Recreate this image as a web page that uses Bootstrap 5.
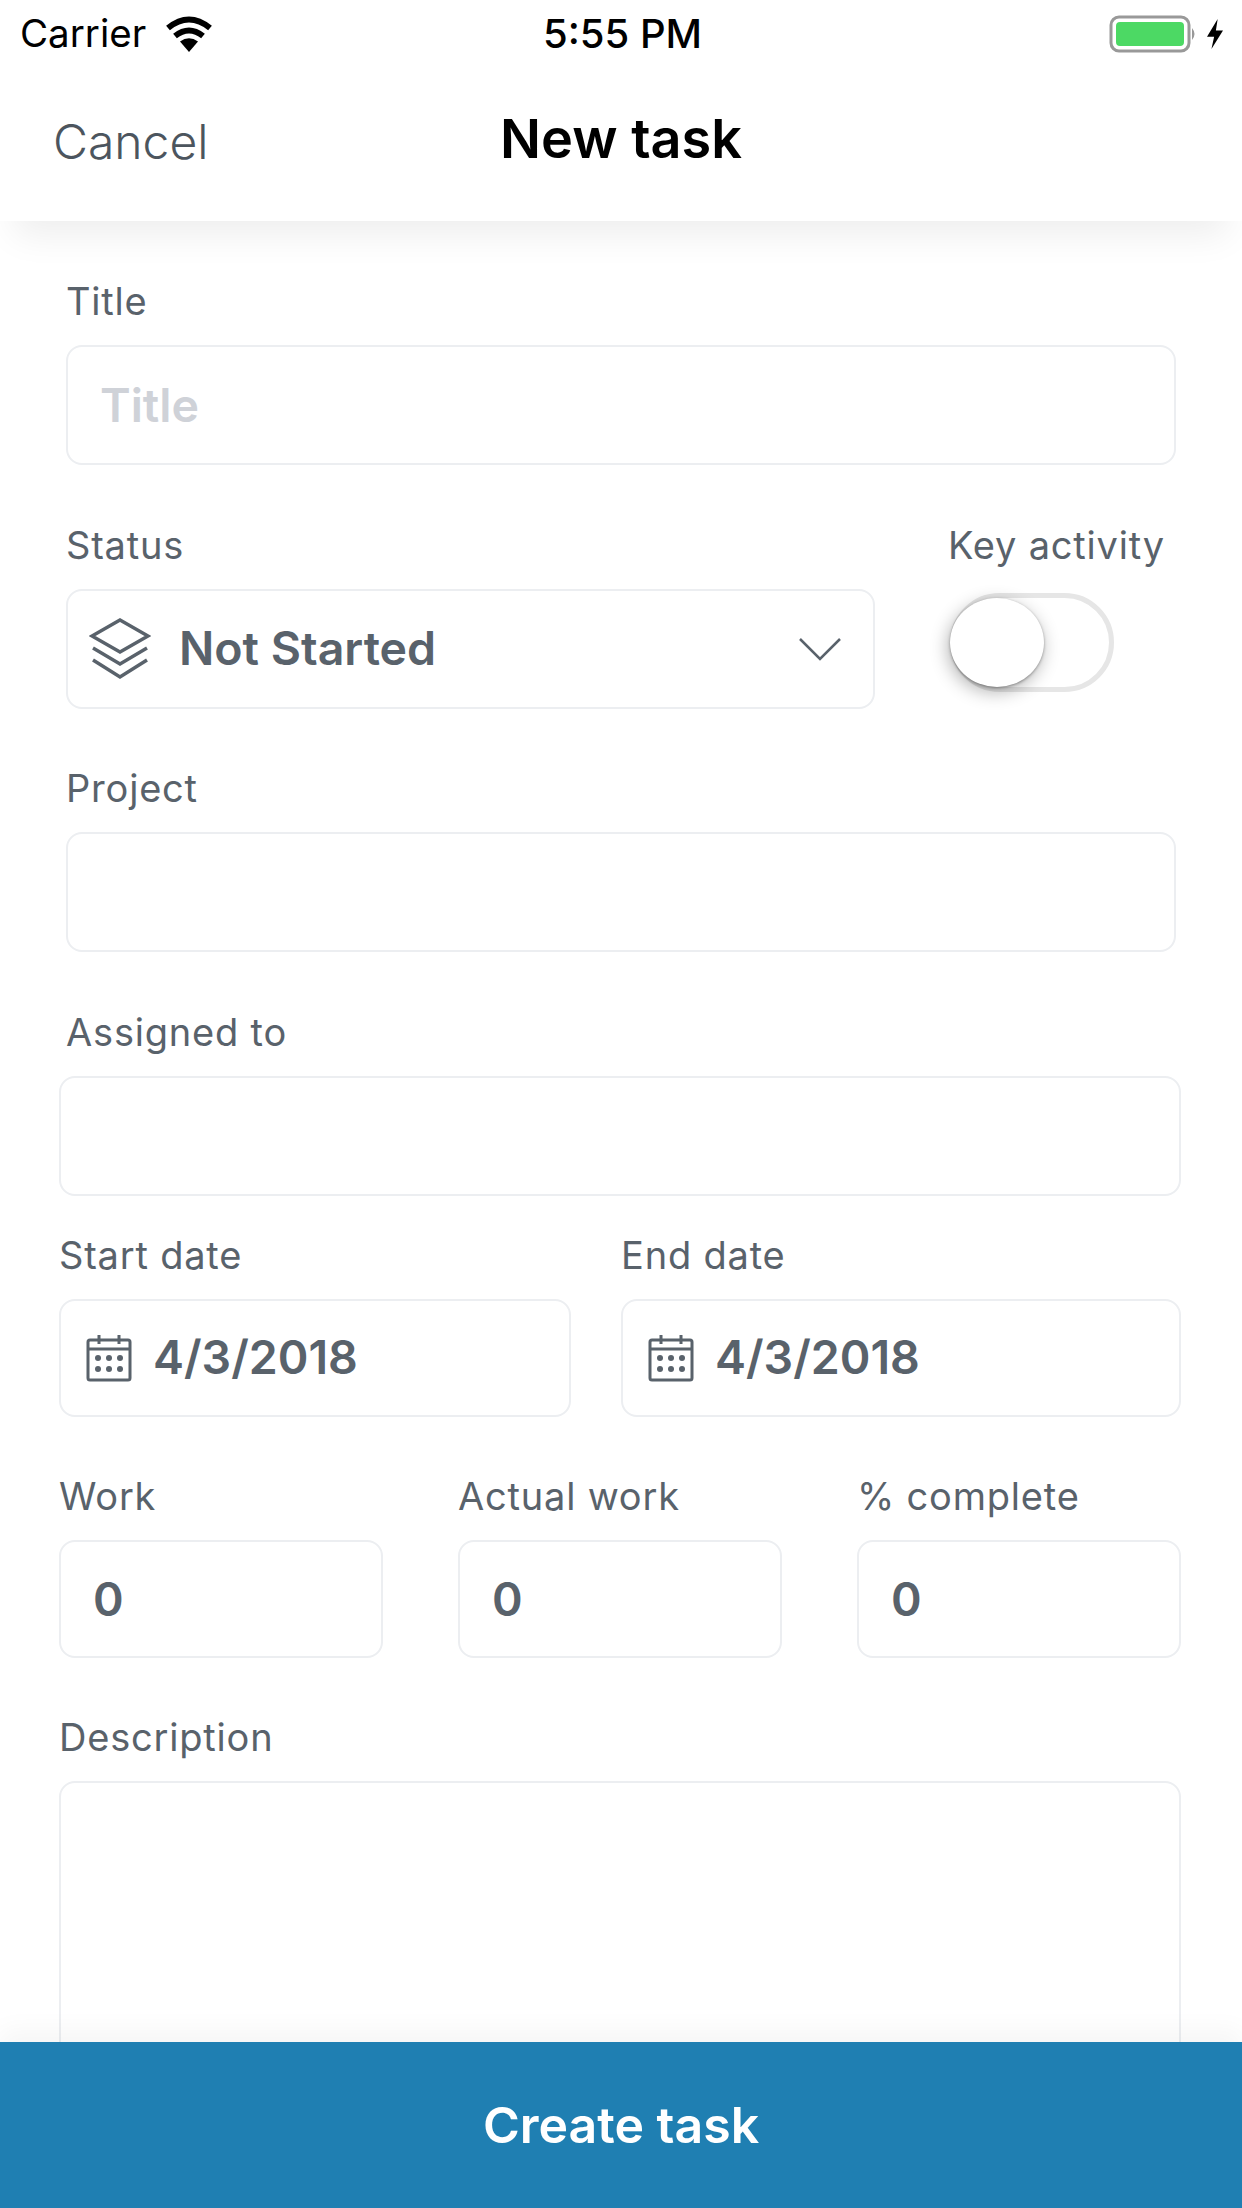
<!DOCTYPE html>
<html lang="en">
<head>
    <meta charset="UTF-8">
    <meta name="viewport" content="width=device-width, initial-scale=1.0">
    <title>New task</title>
    <link href="https://cdn.jsdelivr.net/npm/bootstrap@5.3.0/dist/css/bootstrap.min.css" rel="stylesheet">
    <style>
        html, body {
            height: 100%;
        }
        body {
            font-family: Inter, "Liberation Sans", sans-serif;
            background-color: #fff;
            overflow: hidden;
        }
        .app-screen {
            height: 2208px;
        }
        .status-bar {
            height: 68px;
            padding: 0 17px 0 20px;
            font-size: 38.500px;
            color: #000;
        }
        .status-left, .status-right {
            width: 300px;
        }
        .status-left {
            gap: 18px;
        }
        .status-time {
            font-size: 40px;
            font-weight: 500;
        }
        .top-bar {
            height: 153px;
            z-index: 2;
            background: #fff;
            box-shadow: 0 28px 34px -14px rgba(0, 0, 0, .07);
        }
        .top-cancel {
            left: 53px;
            top: 50%;
            transform: translateY(-54%);
            font-size: 48px;
            color: #4c555e;
            font-weight: 300;
        }
        .top-title {
            font-size: 54px;
            font-weight: 600;
            color: #000;
            margin-top: -12px;
        }
        .form-area {
            padding-top: 58px;
        }
        .fld-label {
            display: block;
            height: 44px;
            line-height: 44px;
            margin-bottom: 22px;
            font-size: 38px;
            letter-spacing: .8px;
            color: #59626b;
            white-space: nowrap;
        }
        .fld-box {
            height: 120px;
            border: 2px solid #eceef1;
            border-radius: 16px;
            background: #fff;
            padding: 0 32px;
            font-size: 46.500px;
            font-weight: 600;
            color: #59626b;
        }
        .fld-box::placeholder {
            color: #cfd2d8;
            opacity: 1;
        }
        .fld-box:focus {
            border-color: #eceef1;
            box-shadow: none;
        }
        .fld-low {
            height: 118px;
        }
        .fld-icon-box {
            padding-left: 25px;
        }
        .fld-area {
            height: 400px;
        }
        .layers-svg {
            margin-left: -4px;
            margin-right: 4px;
        }
        .cal-svg {
            margin-right: 21px;
        }
        .block-a {
            margin: 0 66px 58px;
        }
        .block-status {
            margin-bottom: 57px;
        }
        .block-b {
            margin: 0 61px 57px 59px;
        }
        .block-b .fld-label.keep-in {
            margin-left: 7px;
        }
        .block-tight {
            margin-bottom: 37px;
        }
        .status-col {
            width: 809px;
        }
        .switch-col {
            margin-left: 73px;
        }
        .start-col {
            width: 512px;
        }
        .end-col {
            width: 560px;
            margin-left: 50px;
        }
        .num-col {
            width: 324px;
        }
        .toggle-track {
            width: 164px;
            height: 99px;
            margin-left: 2px;
            margin-top: 26px;
            border: 5px solid #e6e6e6;
            border-radius: 50px;
        }
        .toggle-knob {
            left: -5px;
            top: 0;
            width: 94px;
            height: 89px;
            border-radius: 50%;
            background: #fff;
            box-shadow: -2px 5px 18px rgba(0, 0, 0, .3), 0 1px 3px rgba(0, 0, 0, .35);
        }
        .create-btn {
            height: 166px;
            border: 0;
            border-radius: 0;
            background: #1f7fb2;
            color: #fff;
            font-size: 50px;
            font-weight: 600;
            box-shadow: 0 -12px 24px rgba(0, 0, 0, .04);
        }
    </style>
</head>
<body>
    <div class="app-screen d-flex flex-column">
        <div class="status-bar flex-shrink-0 d-flex align-items-center justify-content-between">
            <div class="status-left d-flex align-items-center">
                <span>Carrier</span>
                <svg width="50" height="36" viewBox="0 0 50 36"><path d="M25 36 16 25.500Q25 19 34 25.500Z" fill="#000"/><path d="M11 20Q25 9 39 20" fill="none" stroke="#000" stroke-width="6"/><path d="M4 12Q25 -5 46 12" fill="none" stroke="#000" stroke-width="6"/></svg>
            </div>
            <div class="status-time">5:55 PM</div>
            <div class="status-right d-flex align-items-center justify-content-end gap-2">
                <svg width="88" height="38" viewBox="0 0 88 38"><rect x="2" y="2" width="78" height="34" rx="8" fill="#fff" stroke="#999" stroke-width="3"/><rect x="7" y="7" width="68" height="24" rx="4" fill="#4cd964"/><path d="M83 13q5 6 0 12z" fill="#999"/></svg>
                <svg width="20" height="32" viewBox="0 0 20 36"><path d="M13 1 1 21H9L6 35 19 14H11Z" fill="#000"/></svg>
            </div>
        </div>
        <div class="top-bar flex-shrink-0 position-relative d-flex align-items-center justify-content-center">
            <span class="top-cancel position-absolute">Cancel</span>
            <span class="top-title">New task</span>
        </div>
        <form class="form-area flex-grow-1 overflow-hidden">
            <div class="block-a">
                <label class="fld-label">Title</label>
                <input class="form-control fld-box" type="text" placeholder="Title">
            </div>
            <div class="block-a block-status d-flex">
                <div class="status-col">
                    <label class="fld-label">Status</label>
                    <div class="fld-box fld-icon-box d-flex align-items-center">
                        <svg class="layers-svg" width="62" height="62" viewBox="0 0 62 62" fill="none" stroke="#59626b" stroke-width="3.500"><path d="M31 2 59 18 31 34 3 18Z"/><path d="M4 30 31 46 58 30"/><path d="M4 42 31 59 58 42"/></svg>
                        <span class="flex-grow-1 ms-4">Not Started</span>
                        <svg width="42" height="24" viewBox="0 0 42 24" fill="none" stroke="#59626b" stroke-width="2.500"><path d="M1 2 21 22 41 2"/></svg>
                    </div>
                </div>
                <div class="switch-col">
                    <label class="fld-label">Key activity</label>
                    <div class="toggle-track position-relative">
                        <div class="toggle-knob position-absolute"></div>
                    </div>
                </div>
            </div>
            <div class="block-a">
                <label class="fld-label">Project</label>
                <input class="form-control fld-box" type="text">
            </div>
            <div class="block-b block-tight">
                <label class="fld-label keep-in">Assigned to</label>
                <input class="form-control fld-box" type="text">
            </div>
            <div class="block-b d-flex">
                <div class="start-col">
                    <label class="fld-label">Start date</label>
                    <div class="fld-box fld-low fld-icon-box d-flex align-items-center">
                        <svg class="cal-svg" width="46" height="48" viewBox="0 0 46 48" fill="none" stroke="#59626b" stroke-width="3"><rect x="2" y="6" width="42" height="40" rx="2"/><path d="M2 15H44M13 1V10M33 1V10"/><g fill="#59626b" stroke="none"><circle cx="12" cy="24" r="3"/><circle cx="23" cy="24" r="3"/><circle cx="34" cy="24" r="3"/><circle cx="12" cy="35" r="3"/><circle cx="23" cy="35" r="3"/><circle cx="34" cy="35" r="3"/></g></svg>
                        <span>4/3/2018</span>
                    </div>
                </div>
                <div class="end-col">
                    <label class="fld-label">End date</label>
                    <div class="fld-box fld-low fld-icon-box d-flex align-items-center">
                        <svg class="cal-svg" width="46" height="48" viewBox="0 0 46 48" fill="none" stroke="#59626b" stroke-width="3"><rect x="2" y="6" width="42" height="40" rx="2"/><path d="M2 15H44M13 1V10M33 1V10"/><g fill="#59626b" stroke="none"><circle cx="12" cy="24" r="3"/><circle cx="23" cy="24" r="3"/><circle cx="34" cy="24" r="3"/><circle cx="12" cy="35" r="3"/><circle cx="23" cy="35" r="3"/><circle cx="34" cy="35" r="3"/></g></svg>
                        <span>4/3/2018</span>
                    </div>
                </div>
            </div>
            <div class="block-b d-flex justify-content-between">
                <div class="num-col">
                    <label class="fld-label">Work</label>
                    <input class="form-control fld-box fld-low" type="text" value="0">
                </div>
                <div class="num-col">
                    <label class="fld-label">Actual work</label>
                    <input class="form-control fld-box fld-low" type="text" value="0">
                </div>
                <div class="num-col">
                    <label class="fld-label">% complete</label>
                    <input class="form-control fld-box fld-low" type="text" value="0">
                </div>
            </div>
            <div class="block-b">
                <label class="fld-label">Description</label>
                <textarea class="form-control fld-box fld-area"></textarea>
            </div>
        </form>
        <button type="button" class="btn create-btn w-100 flex-shrink-0 position-relative">Create task</button>
    </div>
</body>
</html>
